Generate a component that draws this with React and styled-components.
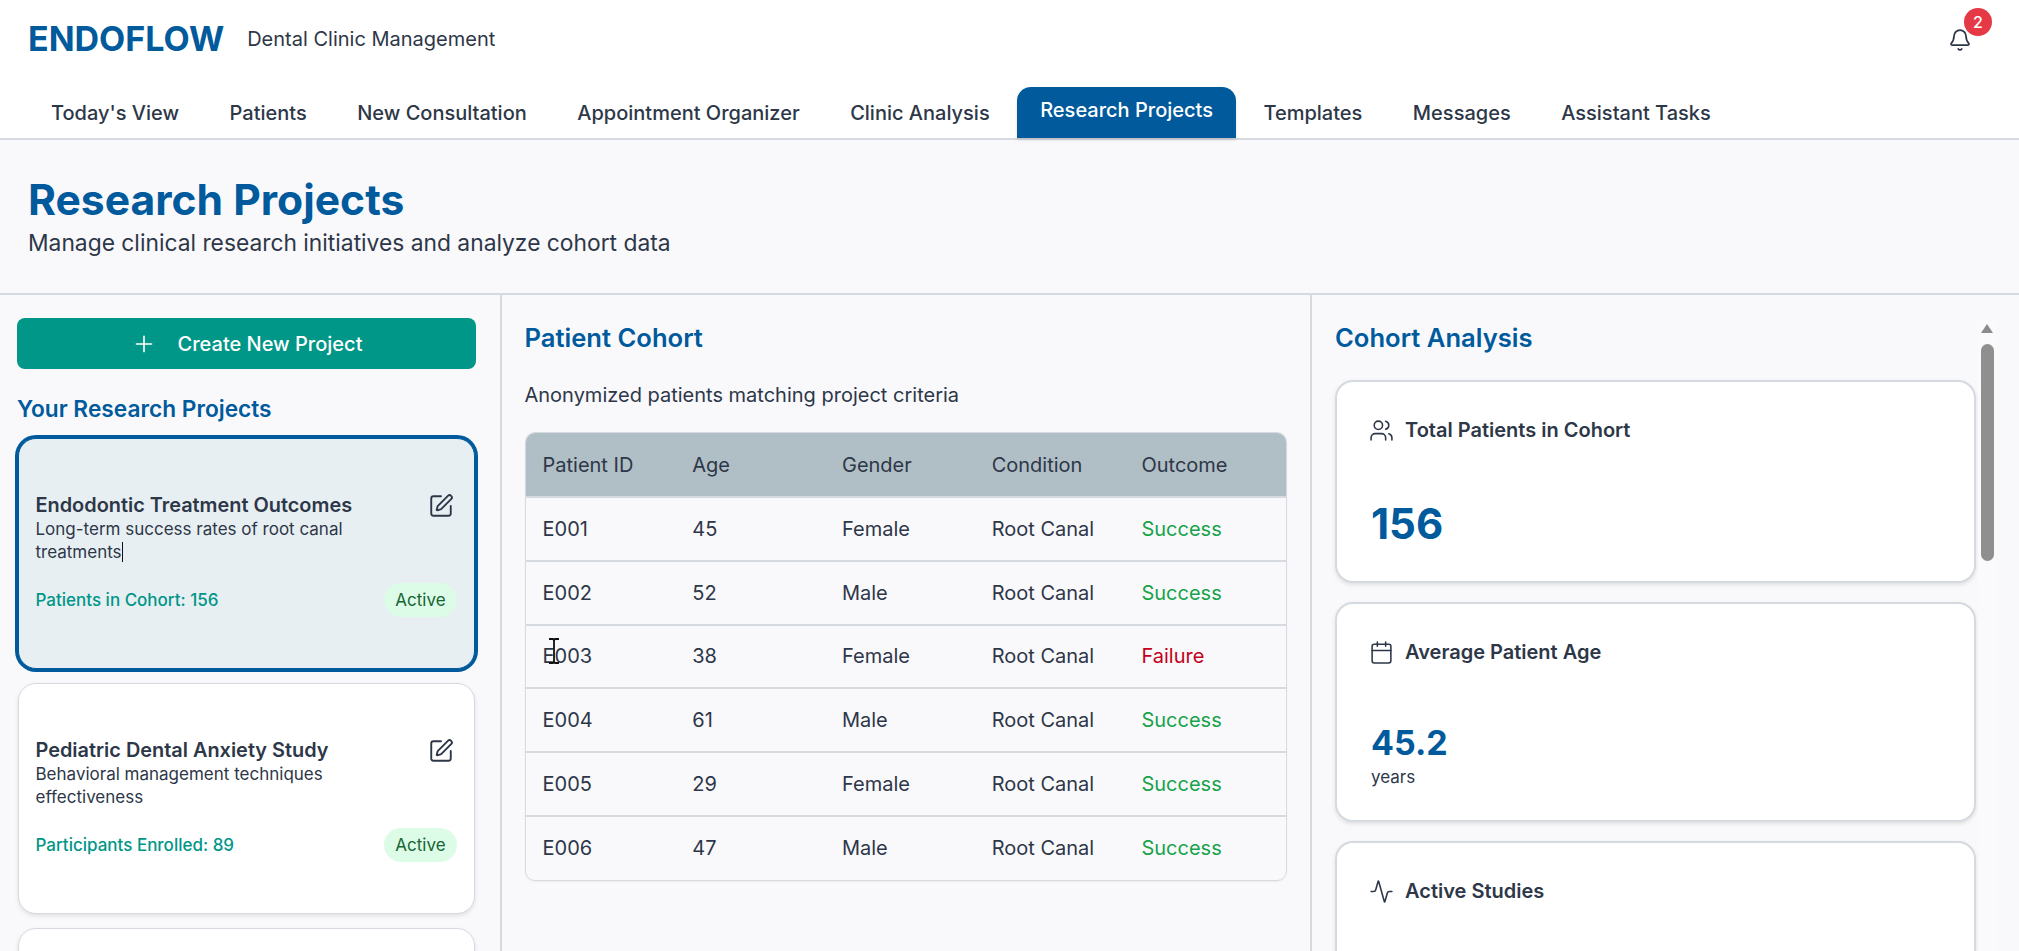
import React from "react";
import styled, { createGlobalStyle } from "styled-components";
import { Bell, Plus, SquarePen, Users, Calendar, Activity } from "lucide-react";

const Global = createGlobalStyle`
  html, body { margin: 0; padding: 0; height: 100%; overflow: hidden; background: #f9f9fc; }
  * { box-sizing: border-box; }
  body { font-family: Inter, "Liberation Sans", sans-serif; color: #2d3748; }
`;
const BLUE = "#005a9c";
const TEAL = "#009688";

const Page = styled.div`
  position: relative;
  height: 951px;
  display: flex;
  flex-direction: column;
  overflow: hidden;
`;
const Header = styled.header`
  background: #fff;
  border-bottom: 2px solid #d5dae0;
  height: 140px;
  flex: none;
  display: flex;
  flex-direction: column;
`;
const TopBar = styled.div`
  height: 87px;
  padding: 0 28px;
  display: flex;
  align-items: flex-start;
  justify-content: space-between;
`;
const Brand = styled.div`
  display: flex;
  align-items: center;
  gap: 23px;
  height: 78px;
`;
const Logo = styled.div`
  font-size: 34px;
  font-weight: 700;
  margin-top: -2px;
  color: ${BLUE};
`;
const Tagline = styled.div`
  font-size: 20px;
  color: #2d3748;
`;
const BellWrap = styled.div`
  position: relative;
  margin: 28px 19px 0 0;
  width: 24px;
  height: 24px;
  color: #2d3748;
`;
const Badge = styled.span`
  position: absolute;
  top: -20px;
  left: 16px;
  width: 28px;
  height: 28px;
  border-radius: 50%;
  background: #e63946;
  color: #fff;
  font-size: 16px;
  font-weight: 500;
  display: flex;
  align-items: center;
  justify-content: center;
`;
const Tabs = styled.nav`
  display: flex;
  gap: 4.5px;
  padding-left: 28px;
  height: 51px;
`;
const Tab = styled.div`
  padding: ${(p) => (p.$active ? "0 23px 6px" : "0 23px")};
  display: flex;
  align-items: center;
  font-size: 20px;
  font-weight: 500;
  border-radius: 14px 14px 0 0;
  background: ${(p) => (p.$active ? BLUE : "transparent")};
  color: ${(p) => (p.$active ? "#fff" : "#2d3748")};
  box-shadow: ${(p) => (p.$active ? "0 2px 3px rgba(0,0,0,.12)" : "none")};
`;
const PageHead = styled.div`
  height: 155px;
  flex: none;
  padding: 30px 28px 0;
  border-bottom: 2px solid #d5dae0;
`;
const Title = styled.h1`
  margin: 0;
  font-size: 42.6px;
  line-height: 60px;
  font-weight: 700;
  color: ${BLUE};
`;
const Subtitle = styled.p`
  margin: 0;
  font-size: 22.8px;
  line-height: 26px;
  color: #2d3748;
`;
const Columns = styled.div`
  flex: 1;
  min-height: 0;
  display: flex;
`;
const LeftCol = styled.aside`
  width: 502px;
  flex: none;
  border-right: 2px solid #d5dae0;
  padding: 23px 24px 0 17px;
  overflow: hidden;
`;
const MidCol = styled.section`
  width: 810px;
  flex: none;
  border-right: 2px solid #d5dae0;
  padding: 21px 23px 0 22.5px;
  overflow: hidden;
`;
const RightCol = styled.section`
  flex: 1;
  position: relative;
  padding: 21px 43px 0 23px;
  overflow: hidden;
`;
const CreateButton = styled.button`
  width: 459px;
  height: 51px;
  border: 0;
  border-radius: 8px;
  background: ${TEAL};
  color: #fff;
  font: 500 20px Inter, sans-serif;
  display: flex;
  align-items: center;
  justify-content: center;
  gap: 21px;
`;
const SideHeading = styled.h2`
  margin: 25px 0 0;
  font-size: 22.7px;
  line-height: 30px;
  font-weight: 600;
  color: ${BLUE};
`;
const ProjectList = styled.div`
  display: flex;
  flex-direction: column;
  gap: 14px;
  margin: 14px 0 0 1px;
`;
const ProjectCard = styled.article`
  height: 231px;
  width: 457px;
  flex: none;
  border-radius: 18px;
  padding: 2px 17px 0 16.5px;
  display: flex;
  flex-direction: column;
  justify-content: center;
  background: ${(p) => (p.$selected ? "#e8eff3" : "#fff")};
  border: 1px solid ${(p) => (p.$selected ? BLUE : "#d5dae0")};
  box-shadow: ${(p) =>
    p.$selected ? `0 0 0 3px ${BLUE}` : "0 2px 4px rgba(0,0,0,.1)"};
`;
const CardTop = styled.div`
  display: flex;
  justify-content: space-between;
  align-items: flex-start;
  height: 26px;
`;
const CardTitle = styled.h3`
  margin: 0;
  font-size: 19.9px;
  line-height: 26px;
  font-weight: 600;
  color: #2d3748;
`;
const CardDesc = styled.p`
  margin: 0;
  width: 340px;
  font-size: 17px;
  line-height: 23px;
  color: #2d3748;
`;
const Caret = styled.span`
  display: inline-block;
  width: 1px;
  height: 20px;
  background: #111;
  vertical-align: -4px;
`;
const EditIcon = styled.span`
  color: #2d3748;
  margin: 1px 3px 0 0;
  display: flex;
`;
const CardFoot = styled.div`
  margin-top: 19px;
  display: flex;
  justify-content: space-between;
  align-items: center;
`;
const Metric = styled.span`
  font-size: 17px;
  font-weight: 500;
  color: ${TEAL};
`;
const Pill = styled.span`
  height: 34px;
  width: 73px;
  border-radius: 17px;
  background: #dcfce7;
  color: #166534;
  font-size: 17px;
  font-weight: 400;
  display: flex;
  align-items: center;
  justify-content: center;
`;
const PanelHeading = styled.h2`
  margin: 0;
  font-size: 25.6px;
  line-height: 44px;
  font-weight: 600;
  color: ${BLUE};
`;
const Note = styled.p`
  margin: 21px 0 23px;
  font-size: 20px;
  line-height: 28px;
  color: #2d3748;
`;
const TableWrap = styled.div`
  width: 762px;
  border: 1px solid #d5dae0;
  border-radius: 10px;
  overflow: hidden;
  box-shadow: 0 1px 2px rgba(0,0,0,.05);
`;
const Table = styled.table`
  width: 100%;
  table-layout: fixed;
  border-collapse: collapse;
  font-size: 20px;
`;
const Col = styled.col`
  width: ${(p) => p.$w}px;
`;
const Th = styled.th`
  height: 64px;
  padding: 0 17px;
  background: #b0bec5;
  font-weight: 400;
  text-align: left;
  color: #2d3748;
`;
const Td = styled.td`
  height: 63.8px;
  padding: 0 17px;
  color: ${(p) => p.$color || "#2d3748"};
  border-top: 2px solid #d5dae0;
`;
const StatStack = styled.div`
  display: flex;
  flex-direction: column;
  gap: 19px;
  margin-top: 20px;
`;
const StatCard = styled.article`
  height: ${(p) => p.$h}px;
  border: 2px solid #d5dae0;
  border-radius: 18px;
  background: #fff;
  box-shadow: 0 2px 4px rgba(0,0,0,.1);
  padding: 32px 33px 0 34px;
  flex: none;
`;
const StatLabel = styled.div`
  display: flex;
  align-items: center;
  gap: 11px;
  height: 32px;
  font-size: 20px;
  font-weight: 600;
  color: #2d3748;
  svg { margin-left: -2px; }
`;
const StatValue = styled.div`
  margin-top: ${(p) => p.$mt}px;
  font-size: ${(p) => p.$size}px;
  line-height: ${(p) => p.$size + 8}px;
  font-weight: 700;
  color: ${BLUE};
`;
const StatUnit = styled.div`
  font-size: 17px;
  line-height: 22px;
  margin-top: 2px;
  color: #2d3748;
`;
const Track = styled.div`
  position: absolute;
  top: 26px;
  right: 22px;
  width: 19px;
  bottom: 0;
  background: #fafafd;
`;
const Arrow = styled.div`
  position: absolute;
  top: 3px;
  left: 3px;
  width: 0;
  height: 0;
  border-left: 6.5px solid transparent;
  border-right: 6.5px solid transparent;
  border-bottom: 9px solid #8c8c8c;
`;
const Thumb = styled.div`
  position: absolute;
  top: 23px;
  left: 3px;
  width: 13px;
  height: 217px;
  border-radius: 7px;
  background: #8f8f8f;
`;
const Pointer = styled.svg`
  position: absolute;
  left: 547px;
  top: 638px;
`;

const tabs = ["Today's View","Patients","New Consultation","Appointment Organizer","Clinic Analysis","Research Projects","Templates","Messages","Assistant Tasks"];
const rows = [
  ["E001", 45, "Female", "Success"],
  ["E002", 52, "Male", "Success"],
  ["E003", 38, "Female", "Failure"],
  ["E004", 61, "Male", "Success"],
  ["E005", 29, "Female", "Success"],
  ["E006", 47, "Male", "Success"],
];
const projects = [
  { t: "Endodontic Treatment Outcomes", d: "Long-term success rates of root canal treatments", m: "Patients in Cohort: 156", sel: true },
  { t: "Pediatric Dental Anxiety Study", d: "Behavioral management techniques effectiveness", m: "Participants Enrolled: 89" },
];

export default function App() {
  return (
    <Page>
      <Global />
      <Header>
        <TopBar>
          <Brand>
            <Logo>ENDOFLOW</Logo>
            <Tagline>Dental Clinic Management</Tagline>
          </Brand>
          <BellWrap>
            <Bell size={24} strokeWidth={1.75} />
            <Badge>2</Badge>
          </BellWrap>
        </TopBar>
        <Tabs>
          {tabs.map((t) => (
            <Tab key={t} $active={t === "Research Projects"}>{t}</Tab>
          ))}
        </Tabs>
      </Header>
      <PageHead>
        <Title>Research Projects</Title>
        <Subtitle>Manage clinical research initiatives and analyze cohort data</Subtitle>
      </PageHead>
      <Columns>
        <LeftCol>
          <CreateButton><Plus size={26} strokeWidth={1.5} />Create New Project</CreateButton>
          <SideHeading>Your Research Projects</SideHeading>
          <ProjectList>
            {projects.map((p) => (
              <ProjectCard key={p.t} $selected={p.sel}>
                <CardTop>
                  <CardTitle>{p.t}</CardTitle>
                  <EditIcon><SquarePen size={26} strokeWidth={1.75} /></EditIcon>
                </CardTop>
                <CardDesc>{p.d}{p.sel && <Caret />}</CardDesc>
                <CardFoot>
                  <Metric>{p.m}</Metric>
                  <Pill>Active</Pill>
                </CardFoot>
              </ProjectCard>
            ))}
            <ProjectCard />
          </ProjectList>
        </LeftCol>
        <MidCol>
          <PanelHeading>Patient Cohort</PanelHeading>
          <Note>Anonymized patients matching project criteria</Note>
          <TableWrap>
            <Table>
              <colgroup>
                <Col $w={149.7} /><Col $w={149.7} /><Col $w={149.7} /><Col $w={149.7} /><Col $w={161} />
              </colgroup>
              <thead>
                <tr>
                  {["Patient ID","Age","Gender","Condition","Outcome"].map((h) => <Th key={h}>{h}</Th>)}
                </tr>
              </thead>
              <tbody>
                {rows.map((r) => (
                  <tr key={r[0]}>
                    <Td>{r[0]}</Td>
                    <Td>{r[1]}</Td>
                    <Td>{r[2]}</Td>
                    <Td>Root Canal</Td>
                    <Td $color={r[3] === "Success" ? "#16a34a" : "#c4001a"}>{r[3]}</Td>
                  </tr>
                ))}
              </tbody>
            </Table>
          </TableWrap>
        </MidCol>
        <RightCol>
          <PanelHeading>Cohort Analysis</PanelHeading>
          <StatStack>
            <StatCard $h={203}>
              <StatLabel><Users size={25} strokeWidth={1.5} />Total Patients in Cohort</StatLabel>
              <StatValue $size={42} $mt={53}>156</StatValue>
            </StatCard>
            <StatCard $h={220}>
              <StatLabel><Calendar size={25} strokeWidth={1.5} />Average Patient Age</StatLabel>
              <StatValue $size={34} $mt={54}>45.2</StatValue>
              <StatUnit>years</StatUnit>
            </StatCard>
            <StatCard $h={220}>
              <StatLabel><Activity size={25} strokeWidth={1.5} />Active Studies</StatLabel>
            </StatCard>
          </StatStack>
          <Track>
            <Arrow />
            <Thumb />
          </Track>
        </RightCol>
      </Columns>
      <Pointer width="14" height="26" viewBox="0 0 14 26" fill="none" stroke="#111" strokeWidth="1.8">
        <path d="M2 1h4l1 1.5L8 1h4M7 2.5v21M2 25h4l1-1.5L8 25h4" />
      </Pointer>
    </Page>
  );
}
